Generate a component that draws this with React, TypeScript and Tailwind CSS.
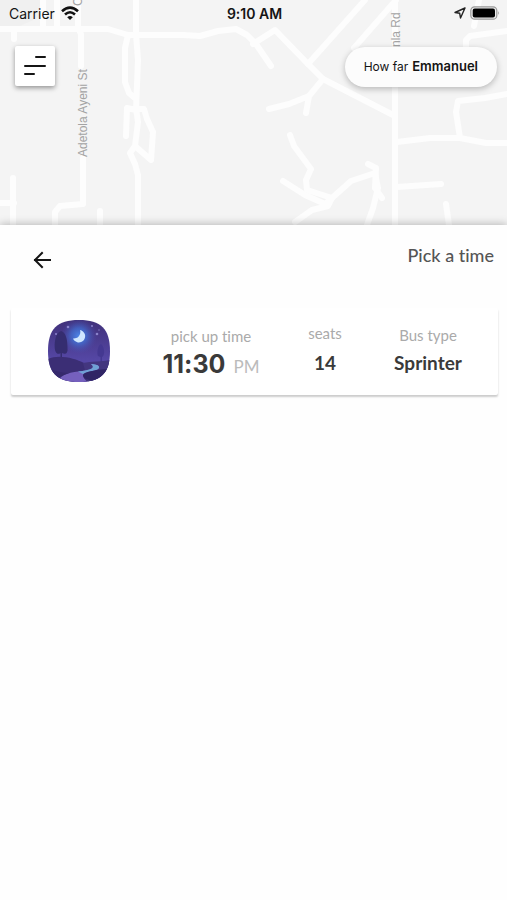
import React from "react"

interface Viaje {
    hora: string;
    periodo: string;
    asientos: number;
    bus: string;
}

const viajes: Viaje[] = [
    { hora: "11:30", periodo: "PM", asientos: 14, bus: "Sprinter" },
]

const Mapa: React.FC = () => {
    return (
        <svg
            aria-hidden="true"
            className="absolute inset-0 h-full w-full"
            viewBox="0 0 507 225"
            preserveAspectRatio="xMidYMin slice">
            <path d="M0 0H40V17L20 26H0Z" fill="#f0f0f0" />
            <g fill="none" stroke="#fdfdfd" strokeWidth="6" strokeLinecap="round" strokeLinejoin="round">
                <path d="M0 29H108L128 35H183L200 36L218 31L236 29L247 35L256 44L271 66" />
                <path d="M43 0V28M57 0V28M136 0V34" />
                <path d="M14 31V39" />
                <path d="M78 0V28L81 34V66M83 158V204L60 206L55 212V225" />
                <path d="M0 203H14M13 178V225M100 211V225" />
                <path d="M128 35L125 48V82L129 93L136 99M136 34L138 60L136 110L127 108L126 136" />
                <path d="M127 109H144L147 119L153 132L151 160L135 146L138 122L136 108M135 146L130 153L135 164L138 175V225" />
                <path d="M253 44L275 30L308 64L323 79L395 116" />
                <path d="M365 0L308 64M396 0L354 48" />
                <path d="M323 79L309 96L289 104L269 109M309 96L306 113" />
                <path d="M395 0V225" />
                <path d="M397 142L430 138H460L486 143H507M460 138L456 112L458 101L485 98L507 94" />
                <path d="M466 50V40L470 36L507 31M479 0L474 26" />
                <path d="M290 135L294 146L311 169L306 180L307 190L332 198L351 181L375 173L378 188L373 208L367 225" />
                <path d="M283 181L305 195L325 204L332 198L328 206L312 210L295 222M368 164L376 168L375 188L382 198" />
                <path d="M397 187L441 184M446 204L449 225" />
            </g>
            <g fill="#a3a3a3" fontSize="12" fontFamily='"Liberation Sans", sans-serif'>
                <text transform="translate(87 157) rotate(-90)">Adetola Ayeni St</text>
                <text transform="translate(82 6) rotate(-90)">C</text>
                <text transform="translate(400 47) rotate(-90)">nla Rd</text>
            </g>
        </svg>
    )
}

const BarraEstado: React.FC = () => {
    return (
        <div className="relative grid h-[26px] grid-cols-3 items-center pr-[7px] pl-[9px] text-[14px]">
            <div className="flex items-center gap-[6px]">
                <span>Carrier</span>
                <svg className="h-[14px] w-[18px]" viewBox="0 0 18 14" fill="none" stroke="#111" strokeWidth="2.6" aria-hidden="true">
                    <path d="M1 5.2Q9 -2 17 5.2" />
                    <path d="M4 8.5Q9 4 14 8.5" />
                    <path d="M9 14L6.2 11.2Q9 8.8 11.8 11.2Z" fill="#111" stroke="none" />
                </svg>
            </div>
            <div className="text-center font-semibold">9:10 AM</div>
            <div className="flex items-center justify-end gap-1">
                <svg className="h-3 w-3" viewBox="0 0 12 12" fill="none" stroke="#222" strokeWidth="1.4" strokeLinejoin="round" aria-hidden="true">
                    <path d="M11 1L1 5.5L5.7 6.3L6.5 11Z" />
                </svg>
                <svg className="h-[14px] w-[30px]" viewBox="0 0 30 14" aria-hidden="true">
                    <rect x="0.8" y="0.8" width="26" height="12.4" rx="3.8" fill="#ededed" stroke="#999" strokeWidth="1.2" />
                    <rect x="2.7" y="2.6" width="22.3" height="8.8" rx="2" fill="#000" />
                    <path d="M28.2 5V9Q30 7 28.2 5Z" fill="#999" />
                </svg>
            </div>
        </div>
    )
}

const IconoNoche: React.FC = () => {
    return (
        <svg className="h-[62px] w-[62px]" viewBox="0 0 62 62" role="img" aria-label="Night">
            <defs>
                <clipPath id="forma">
                    <path d="M31 0C53 0 62 9 62 31S53 62 31 62S0 53 0 31S9 0 31 0Z" />
                </clipPath>
                <linearGradient id="cielo" x1="0" y1="0" x2="0" y2="1">
                    <stop offset="0" stopColor="#40317a" />
                    <stop offset="0.65" stopColor="#5547a5" />
                    <stop offset="1" stopColor="#5547a5" />
                </linearGradient>
                <radialGradient id="brillo">
                    <stop offset="0" stopColor="#4d86e8" />
                    <stop offset="0.45" stopColor="#426dd0" stopOpacity="0.75" />
                    <stop offset="1" stopColor="#4a4aa8" stopOpacity="0" />
                </radialGradient>
            </defs>
            <g clipPath="url(#forma)">
                <path d="M0 0H62V62H0Z" fill="url(#cielo)" />
                <circle cx="31" cy="16" r="18" fill="url(#brillo)" />
                <path d="M32 10A6.3 6.3 0 1 1 25 18.5A6.5 6.5 0 0 0 32 10Z" fill="#cfe6ff" />
                <g fill="#8a83cb">
                    <circle cx="20" cy="7" r="1.3" />
                    <circle cx="8" cy="14" r="1" />
                    <circle cx="44" cy="6" r="1" />
                    <circle cx="49" cy="14" r="1.3" />
                    <circle cx="51" cy="10" r="0.7" />
                </g>
                <path d="M13 11C7 13 6 24 7 30C8 35 12 34 12.5 33V45H14V33C18 35 20 33 19.5 28C19.5 20 18 12 13 11Z" fill="#352d70" />
                <path d="M53 24C49 26 49 34 50 36L52.5 37V43H54V37C57 36 57 27 53 24Z" fill="#443891" />
                <path d="M0 39C10 34 27 38 36 43L47 44L62 41V62H0Z" fill="#3b2e75" />
                <path d="M35 43C43 41 54 42 62 40V62H40Z" fill="#43367f" />
                <path d="M10 62C12 54 24 52 34 51C43 50 48 48 43 44C51 44 54 48 48 50C39 52 30 55 40 62Z" fill="#7560bd" />
                <path d="M30 51.5C43 50 48 48 43 44C51 44 54 48 48 50C43 51.5 38 52 35 54Z" fill="#70a1d5" />
                <path d="M0 48C8 52 17 53 21 53C14 55 9 58 10 62H0Z" fill="#35296c" />
                <path d="M62 49C51 49 35 52 35 55C34 59 43 60 47 62H62Z" fill="#302565" />
            </g>
        </svg>
    )
}

const TarjetaViaje: React.FC<{ viaje: Viaje }> = ({ viaje }) => {
    return (
        <li className="grid grid-cols-[136fr_128fr_100fr_106fr] rounded-[2px] bg-white pt-3 pr-[17px] pb-3 shadow-[0_2px_2px_rgba(0,0,0,0.2)]">
            <div className="flex justify-center">
                <IconoNoche />
            </div>
            <div className="flex flex-col items-center pt-[6px] whitespace-nowrap">
                <span className="text-[15px] leading-5 text-[#aaa]">pick up time</span>
                <div className="flex items-baseline gap-2 pt-[2px] leading-8">
                    <span className="font-['Inter',sans-serif] text-[25px] font-bold text-[#3a3a3a]">{viaje.hora}</span>
                    <span className="text-[17px] text-[#bbb]">{viaje.periodo}</span>
                </div>
            </div>
            <div className="flex flex-col items-center pt-[3px] whitespace-nowrap">
                <span className="text-[15px] leading-5 text-[#aaa]">seats</span>
                <span className="pt-1 text-[19px] leading-8 font-bold text-[#3a3a3a]">{viaje.asientos}</span>
            </div>
            <div className="flex flex-col items-center pt-[5px] whitespace-nowrap">
                <span className="text-[15px] leading-5 text-[#aaa]">Bus type</span>
                <span className="pt-[2px] text-[19px] leading-8 font-bold text-[#3a3a3a]">{viaje.bus}</span>
            </div>
        </li>
    )
}

const App: React.FC = () => {
    return (
        <div className="flex min-h-screen flex-col overflow-hidden bg-[#fefefe] font-['Lato',sans-serif] [font-variant-ligatures:none]">
            <header className="relative overflow-hidden bg-[#f4f4f4] pb-[138px] font-['Inter',sans-serif] text-[#151515]">
                <Mapa />
                <BarraEstado />
                <div className="relative flex items-end justify-between pt-5 pr-[10px] pl-[15px]">
                    <button
                        type="button"
                        aria-label="Menu"
                        className="mb-[1px] flex h-10 w-10 items-center justify-center rounded-[2px] bg-white shadow-[0_2px_5px_rgba(0,0,0,0.4)]">
                        <svg className="h-6 w-6" viewBox="0 0 24 24" stroke="#151515" strokeWidth="2" strokeLinecap="round" aria-hidden="true">
                            <path d="M13 3H22M2 12H22M2 20H11" />
                        </svg>
                    </button>
                    <div className="flex h-10 items-center gap-1 rounded-full bg-[#fcfcfc] px-[19px] text-[12px] shadow-[0_2px_6px_rgba(0,0,0,0.25)]">
                        <span>How far</span>
                        <span className="text-[13px] font-semibold">Emmanuel</span>
                    </div>
                </div>
            </header>
            <main className="relative flex-1 bg-[#fefefe] shadow-[0_-1px_8px_rgba(0,0,0,0.25)]">
                <div className="flex items-start justify-between pt-[18px] pr-[13px] pl-[30px]">
                    <button type="button" aria-label="Back" className="pt-[5px]">
                        <svg className="h-6 w-6" viewBox="0 0 24 24" fill="none" stroke="#151515" strokeWidth="2" strokeLinecap="square" aria-hidden="true">
                            <path d="M20 12H5M12 5L5 12L12 19" />
                        </svg>
                    </button>
                    <h1 className="text-[18px] leading-6 font-medium text-[#555]">Pick a time</h1>
                </div>
                <ul className="flex flex-col gap-3 pt-9 pr-[9px] pb-4 pl-[11px]">
                    {viajes.map((viaje, index) => (
                        <TarjetaViaje key={index} viaje={viaje} />
                    ))}
                </ul>
            </main>
        </div>
    )
}

export default App;
